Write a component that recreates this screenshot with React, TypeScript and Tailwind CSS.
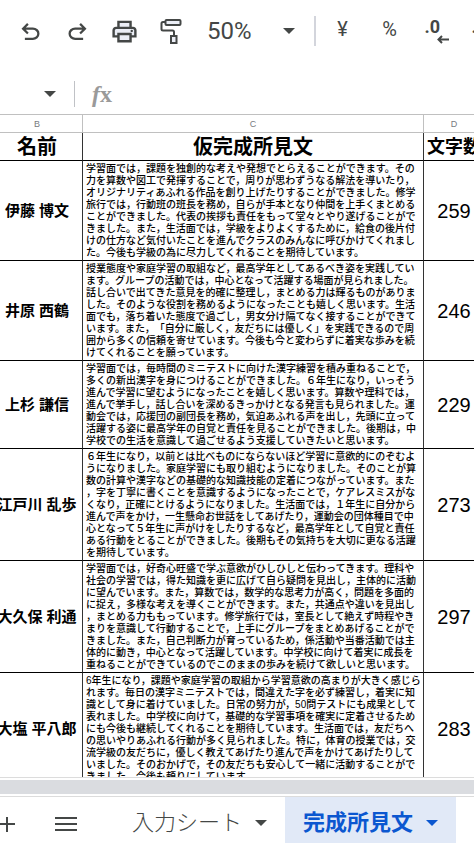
import { useState } from "react";
import type { ReactNode } from "react";

const students = [
  {
    name: "伊藤 博文",
    count: 259,
    lines: [
      "学習面では，課題を独創的な考えや発想でとらえることができます。その",
      "力を算数や図工で発揮することで，周りが思わずうなる解法を導いたり，",
      "オリジナリティあふれる作品を創り上げたりすることができました。修学",
      "旅行では，行動班の班長を務め，自らが手本となり仲間を上手くまとめる",
      "ことができました。代表の挨拶も責任をもって堂々とやり遂げることがで",
      "きました。また，生活面では，学級をよりよくするために，給食の後片付",
      "けの仕方など気付いたことを進んでクラスのみんなに呼びかけてくれまし",
      "た。今後も学級の為に尽力してくれることを期待しています。",
    ],
  },
  {
    name: "井原 西鶴",
    count: 246,
    lines: [
      "授業態度や家庭学習の取組など，最高学年としてあるべき姿を実践してい",
      "ます。グループの活動では，中心となって活躍する場面が見られました。",
      "話し合いで出てきた意見を的確に整理し，まとめる力は輝るものがありま",
      "した。そのような役割を務めるようになったことも嬉しく思います。生活",
      "面でも，落ち着いた態度で過ごし，男女分け隔てなく接することができて",
      "います。また，「自分に厳しく，友だちには優しく」を実践できるので周",
      "囲から多くの信頼を寄せています。今後も今と変わらずに着実な歩みを続",
      "けてくれることを願っています。",
    ],
  },
  {
    name: "上杉 謙信",
    count: 229,
    lines: [
      "学習面では，毎時間のミニテストに向けた漢字練習を積み重ねることで，",
      "多くの新出漢字を身につけることができました。６年生になり，いっそう",
      "進んで学習に望むようになったことを嬉しく思います。算数や理科では，",
      "進んで挙手し，話し合いを深めるきっかけとなる発言も見られました。運",
      "動会では，応援団の副団長を務め，気迫あふれる声を出し，先頭に立って",
      "活躍する姿に最高学年の自覚と責任を見ることができました。後期は，中",
      "学校での生活を意識して過ごせるよう支援していきたいと思います。",
    ],
  },
  {
    name: "江戸川 乱歩",
    count: 273,
    lines: [
      "６年生になり，以前とは比べものにならないほど学習に意欲的にのぞむよ",
      "うになりました。家庭学習にも取り組むようになりました。そのことが算",
      "数の計算や漢字などの基礎的な知識技能の定着につながっています。また",
      "，字を丁寧に書くことを意識するようになったことで，ケアレスミスがな",
      "くなり，正確にとけるようになりました。生活面では，１年生に自分から",
      "進んで声をかけ，一生懸命お世話をしてあげたり，運動会の団体種目で中",
      "心となって５年生に声がけをしたりするなど，最高学年として自覚と責任",
      "ある行動をとることができました。後期もその気持ちを大切に更なる活躍",
      "を期待しています。",
    ],
  },
  {
    name: "大久保 利通",
    count: 297,
    lines: [
      "学習面では，好奇心旺盛で学ぶ意欲がひしひしと伝わってきます。理科や",
      "社会の学習では，得た知識を更に広げて自ら疑問を見出し，主体的に活動",
      "に望んでいます。また，算数では，数学的な思考力が高く，問題を多面的",
      "に捉え，多様な考えを導くことができます。また，共通点や違いを見出し",
      "，まとめる力ももっています。修学旅行では，室長として絶えず時程やき",
      "まりを意識して行動することで，上手にグループをまとめあげることがで",
      "きました。また，自己判断力が育っているため，係活動や当番活動では主",
      "体的に動き，中心となって活躍しています。中学校に向けて着実に成長を",
      "重ねることができているのでこのままの歩みを続けて欲しいと思います。",
    ],
  },
  {
    name: "大塩 平八郎",
    count: 283,
    lines: [
      "6年生になり，課題や家庭学習の取組から学習意欲の高まりが大きく感じら",
      "れます。毎日の漢字ミニテストでは，間違えた字を必ず練習し，着実に知",
      "識として身に着けていました。日常の努力が，50問テストにも成果として",
      "表れました。中学校に向けて，基礎的な学習事項を確実に定着させるため",
      "にも今後も継続してくれることを期待しています。生活面では，友だちへ",
      "の思いやりあふれる行動が多く見られました。特に，体育の授業では，交",
      "流学級の友だちに，優しく教えてあげたり進んで声をかけてあげたりして",
      "いました。そのおかげで，その友だちも安心して一緒に活動することがで",
      "きました。今後も頼りにしています。",
    ],
  },
];

const App = () => {
  const [zoom, setZoom] = useState("50%");
  const [formula, setFormula] = useState("");

  return (
    <div className="flex h-screen w-full flex-col overflow-hidden bg-white font-['Liberation_Sans','Noto_Sans_CJK_JP',sans-serif] text-black">
      {/* Toolbar */}
      <header className="mb-3 flex h-[62px] shrink-0 items-center overflow-hidden pl-[7px] text-[#444746]">
        <ToolButton label="元に戻す">
          <UndoIcon />
        </ToolButton>
        <ToolButton label="やり直し">
          <span className="-scale-x-100">
            <UndoIcon />
          </span>
        </ToolButton>
        <ToolButton label="印刷">
          <PrintIcon />
        </ToolButton>
        <ToolButton label="書式を貼り付け">
          <PaintIcon />
        </ToolButton>
        <label className="flex h-[30px] w-[121px] shrink-0 items-center border-r-2 border-[#d3d5dc] pl-3">
          <select
            aria-label="ズーム"
            value={zoom}
            onChange={(e) => setZoom(e.target.value)}
            className="w-[76px] appearance-none bg-transparent font-[Roboto,sans-serif] text-2xl leading-6 outline-none"
          >
            <option>50%</option>
            <option>75%</option>
            <option>100%</option>
          </select>
          <Caret />
        </label>
        <span className="w-[3px] shrink-0" />
        <ToolButton label="通貨の表示形式">
          <span className="pb-1 font-[Roboto,sans-serif] text-xl leading-6">¥</span>
        </ToolButton>
        <ToolButton label="パーセント表示">
          <span className="pb-1 font-[Roboto,sans-serif] text-xl leading-6">%</span>
        </ToolButton>
        <ToolButton label="小数点以下の桁数を減らす">
          <DecimalLabel text=".0" />
        </ToolButton>
        <ToolButton label="小数点以下の桁数を増やす">
          <DecimalLabel text=".00" />
        </ToolButton>
      </header>

      {/* Formula bar */}
      <div className="flex h-10 shrink-0 items-center text-[#444746]">
        <button aria-label="名前ボックス" className="flex w-[74px] justify-end pr-[18px]">
          <Caret />
        </button>
        <label htmlFor="formula" className="flex h-[26px] items-center border-l border-[#c0c2c6] pl-[17px] font-['Liberation_Serif',serif] text-2xl leading-6 font-bold text-[#9a9a9a]">
          <i>f</i>x
        </label>
        <input
          id="formula"
          value={formula}
          onChange={(e) => setFormula(e.target.value)}
          className="ml-3 h-8 min-w-0 flex-1 text-lg outline-none"
        />
      </div>

      {/* Grid */}
      <main className="min-h-0 flex-1 overflow-hidden">
        <div className="-mr-[11px] -ml-2">
          <table className="w-full table-fixed border-separate border-spacing-0">
            <colgroup>
              <col className="w-[91px]" />
              <col />
              <col className="w-[61px]" />
            </colgroup>
            <thead>
              <tr className="h-[19px] text-[9px] leading-3 text-[#777b80]">
                {["B", "C", "D"].map((col) => (
                  <th key={col} scope="col" className="border-y border-r border-[#c0c0c0] p-0 font-normal">
                    {col}
                  </th>
                ))}
              </tr>
            </thead>
            <tbody>
              <tr className="h-7 text-xl leading-6">
                <th scope="col" className="border-r border-b border-r-[#333] border-b-black p-0">名前</th>
                <th scope="col" className="border-r border-b border-r-[#333] border-b-black p-0">仮完成所見文</th>
                <th scope="col" className="border-r border-b border-r-[#333] border-b-black p-0 text-lg leading-6 whitespace-nowrap">文字数</th>
              </tr>
              {students.map((s) => (
                <tr key={s.name}>
                  <th scope="row" className="border-r border-b border-r-[#333] border-b-black p-0 text-[15px] leading-5 whitespace-nowrap">
                    {s.name}
                  </th>
                  <td className="border-r border-b border-r-[#333] border-b-black pt-[2px] pr-0 pb-px pl-[3px] text-[10px] leading-3 font-medium whitespace-pre [text-spacing-trim:space-all]">
                    {s.lines.join("\n")}
                  </td>
                  <td className="border-r border-b border-r-[#333] border-b-black p-0 text-center text-xl leading-6">
                    {s.count}
                  </td>
                </tr>
              ))}
            </tbody>
          </table>
        </div>
      </main>

      {/* Scrollbar track */}
      <div className="shrink-0 border-y border-[#dcdcdc] bg-white py-[2px]">
        <div className="h-[14px] bg-[#dadce0]" />
      </div>

      {/* Sheet tabs */}
      <footer className="flex h-[46px] shrink-0 items-stretch text-[#444746]">
        <button aria-label="シートを追加" className="flex items-center pt-2">
          <svg width="15" height="16" viewBox="0 0 15 16" stroke="currentColor" strokeWidth="2">
            <path d="M0 8h15M7 1v15" />
          </svg>
        </button>
        <button aria-label="すべてのシート" className="ml-10 flex items-center pt-2">
          <svg width="22" height="16" viewBox="0 0 22 16" stroke="currentColor" strokeWidth="2">
            <path d="M0 2h22M0 8h22M0 14h22" />
          </svg>
        </button>
        <button className="ml-[37px] flex items-center gap-[13px] px-[18px] pt-[6px] text-[22px] leading-6 font-light whitespace-nowrap">
          入力シート
          <Caret />
        </button>
        <button className="flex items-center gap-[13px] bg-[#e1e9f7] px-[18px] pt-[6px] text-[22px] leading-6 font-bold whitespace-nowrap text-[#0b57d0]">
          完成所見文
          <Caret />
        </button>
      </footer>
    </div>
  );
};

/* ------------------- Components ------------------- */
const ToolButton = ({ label, children }: { label: string; children: ReactNode }) => (
  <button aria-label={label} className="flex h-10 w-[47px] shrink-0 items-center justify-center">
    {children}
  </button>
);

const DecimalLabel = ({ text }: { text: string }) => (
  <span className="flex w-6 flex-col text-left">
    <span className="font-[Roboto,sans-serif] text-lg leading-4 font-bold">{text}</span>
    <svg className="self-end" width="12" height="9" viewBox="0 0 12 9" fill="none" stroke="currentColor" strokeWidth="2">
      <path d="M12 4.5H1.5M5 1L1.5 4.5L5 8" />
    </svg>
  </span>
);

const Caret = () => (
  <svg className="shrink-0" width="12" height="6" viewBox="0 0 12 6" fill="currentColor">
    <path d="M0 0h12L6 6z" />
  </svg>
);

const UndoIcon = () => (
  <svg width="27" height="27" viewBox="0 -980 960 960" fill="currentColor">
    <path d="M280-200v-80h284q63 0 109.5-40T720-420q0-60-46.5-100T564-560H312l104 104-56 56-200-200 200-200 56 56-104 104h252q97 0 169.5 63T800-420q0 94-72.5 157T564-200H280Z" />
  </svg>
);

const PrintIcon = () => (
  <svg width="29" height="29" viewBox="0 -960 960 960" fill="currentColor">
    <path fill="#ebeef6" d="M280-800h400v640H280zM120-600h720v280H120z" />
    <path d="M640-640v-120H320v120h-80v-200h480v200h-80Zm-480 80h640-640Zm560 100q17 0 28.5-11.5T760-500q0-17-11.5-28.5T720-540q-17 0-28.5 11.5T680-500q0 17 11.5 28.5T720-460Zm-80 260v-160H320v160h320Zm80 80H240v-160H80v-240q0-51 35-85.5t85-34.5h560q51 0 85.5 34.5T880-520v240H720v160Zm80-240v-160q0-17-11.5-28.5T760-560H200q-17 0-28.5 11.5T160-520v160h80v-80h480v80h80Z" />
  </svg>
);

const PaintIcon = () => (
  <svg width="26" height="26" viewBox="0 0 26 26" fill="none" stroke="currentColor" strokeWidth="2">
    <rect x="6.500" y="2" width="15" height="5" rx="1" fill="#ebeef6" />
    <path d="M6.500 4H4Q2.500 4 2.500 5.500V11q0 1.500 1.500 1.500H13.500q1.500 0 1.500 1.500v4" />
    <rect x="12" y="18" width="5.500" height="7" fill="#ebeef6" />
  </svg>
);

export default App;
